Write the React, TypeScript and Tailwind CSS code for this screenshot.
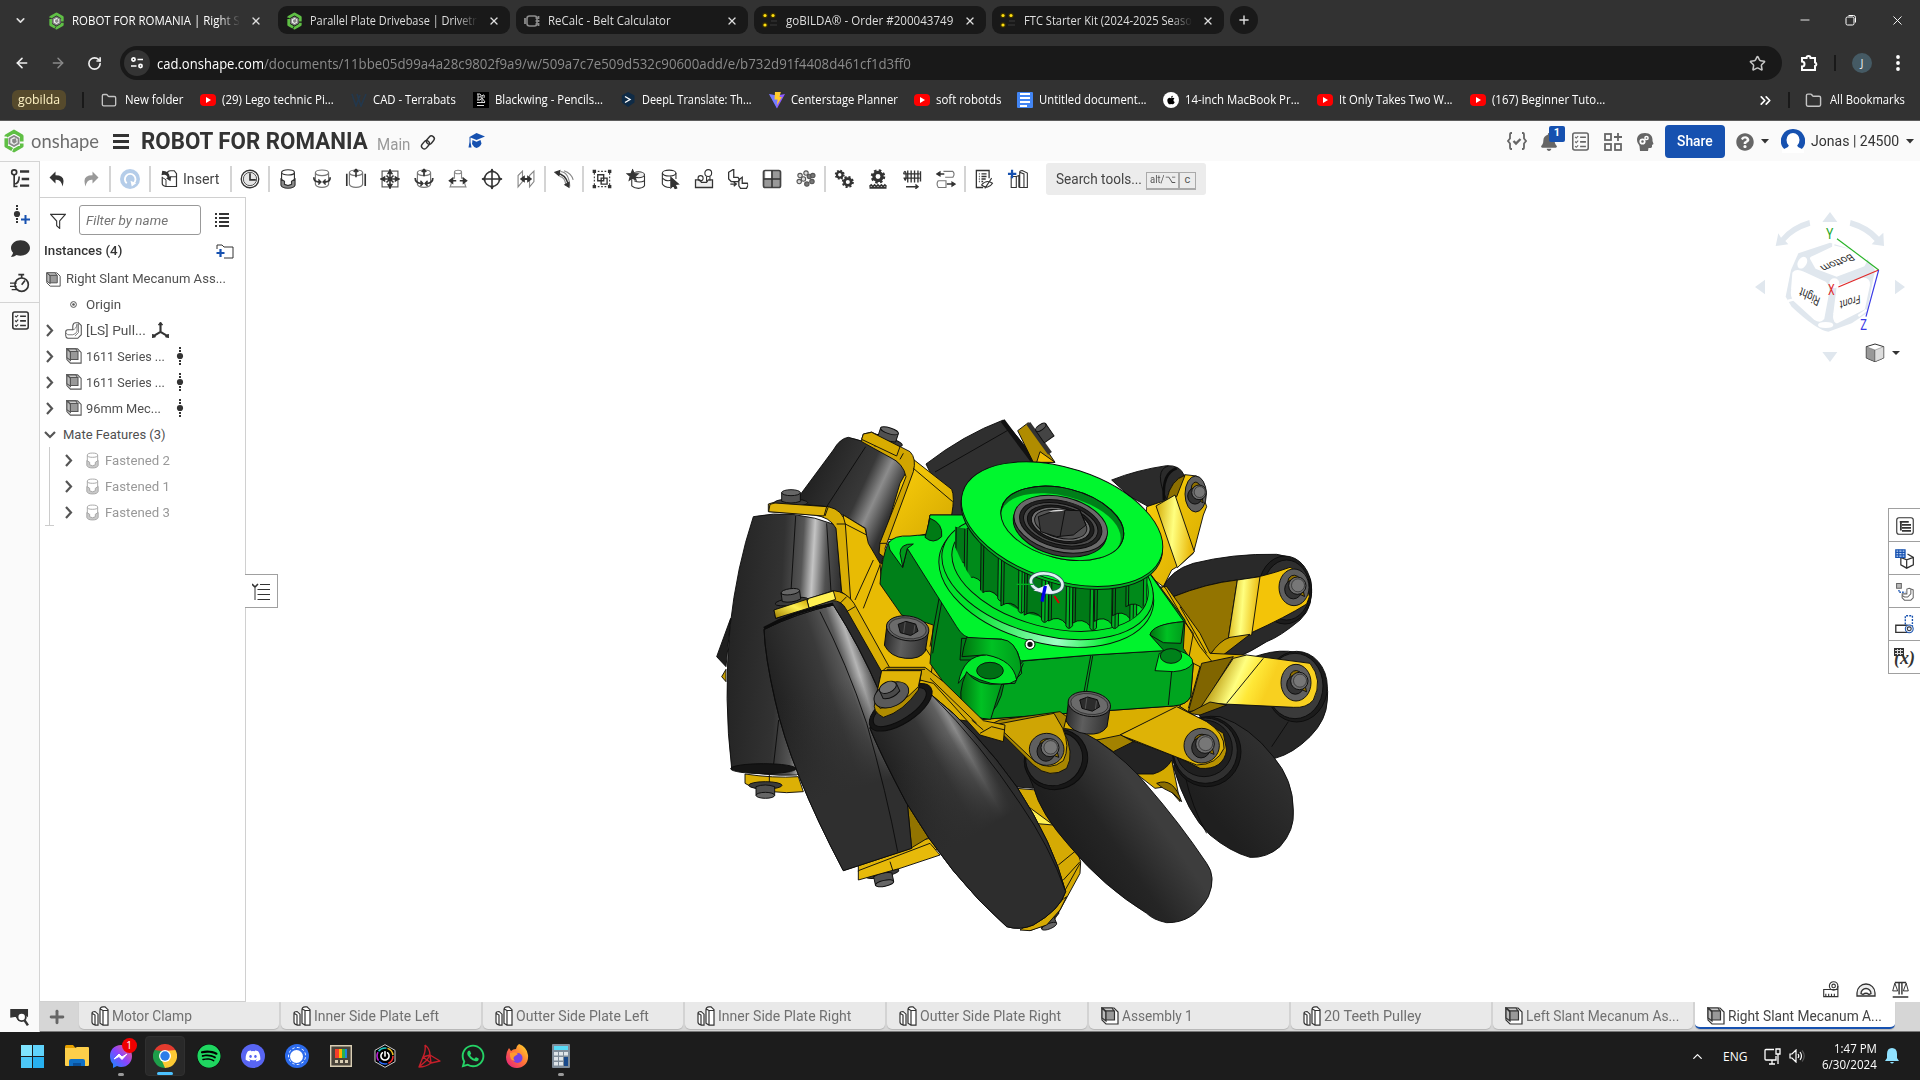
import React, { useLayoutEffect, useRef, useState } from "react";
import {
  ArrowLeft, ArrowRight, RotateCw, Star, X, Plus, Minus, ChevronDown, ChevronUp, ChevronsRight, Folder,
} from "lucide-react";
import {
  FaSpotify, FaDiscord, FaWhatsapp, FaApple, FaBell, FaComment, FaQuestionCircle, FaPowerOff,
} from "react-icons/fa";

/* Text drawn at an exact width, condensed or widened horizontally */
function Fit({ w, children, className = "" }: { w: number; children: React.ReactNode; className?: string }) {
  const ref = useRef<HTMLSpanElement>(null);
  const [s, setS] = useState(1);
  useLayoutEffect(() => {
    if (ref.current) setS(w / ref.current.offsetWidth);
  }, [w]);
  return (
    <span className={"inline-flex shrink-0 whitespace-nowrap " + className} style={{ width: w }}>
      <span ref={ref} className="inline-block origin-left whitespace-pre" style={{ transform: `scaleX(${s})` }}>
        {children}
      </span>
    </span>
  );
}

function Svg({ children, s = 24, className = "" }: { children: React.ReactNode; s?: number; className?: string }) {
  return (
    <svg viewBox="0 0 24 24" width={s} height={s} className={"shrink-0 " + className} fill="none" stroke="#333" strokeWidth="1.3">
      {children}
    </svg>
  );
}

function HexLogo({ s = 18 }: { s?: number }) {
  return (
    <svg viewBox="1 0 22 26" width={s} height={s * 1.2} className="shrink-0" fill="none">
      <path d="M12 2.500 20.500 7.500V18.500L12 23.500 3.500 18.500V7.500Z" stroke="#5fbf45" strokeWidth="4" strokeDasharray="16 2 14 1" strokeLinejoin="round" />
      <path d="M12 7.500 17 10.3V15.8L12 18.500 7 15.8V10.3Z" stroke="#888" strokeWidth="2" fill="#eee" />
      <path d="M10 11l4-1 1 4-3 2-2-2z" fill="#888" />
    </svg>
  );
}

function GoBilda() {
  return (
    <svg viewBox="0 0 16 20" width="16" height="20" className="shrink-0">
      <path d="M9 10h6M8 14h7" stroke="#3a3a3a" />
      {[[3, 4.500], [11, 4.500], [3, 14]].map(([x, y], i) => (
        <g key={i}>
          <circle cx={x} cy={y} r="2.800" fill="#3a3000" />
          <circle cx={x} cy={y} r="1.600" fill="#ffdf10" />
        </g>
      ))}
    </svg>
  );
}

function Belt() {
  return (
    <svg viewBox="0 0 16 12" width="16" height="12" fill="none" stroke="#8b8b8b">
      <rect x="3" y="1" width="10" height="10" rx="2.500" strokeWidth="1.600" />
      <path d="M1 3v6M12.500 2v2M14.500 1v3M12.500 5v2M14.500 5v2M12.500 8v2M14.500 8v3" strokeWidth="1.800" />
    </svg>
  );
}

const tabs = [
  { t: "ROBOT FOR ROMANIA | Right S", w: 168, icon: <HexLogo s={15} />, on: true },
  { t: "Parallel Plate Drivebase | Drivetr", w: 167, icon: <HexLogo s={15} /> },
  { t: "ReCalc - Belt Calculator", w: 123, icon: <Belt /> },
  { t: "goBILDA® - Order #200043749", w: 167, icon: <GoBilda /> },
  { t: "FTC Starter Kit (2024-2025 Seaso", w: 168, icon: <GoBilda /> },
];

function TabStrip() {
  return (
    <div className="flex h-[40px] items-center text-[#dedede]">
      <div className="flex w-[40px] justify-center">
        <ChevronDown size={13} strokeWidth={3} />
      </div>
      {tabs.map((t, i) => (
        <div key={i} className={"mr-[6px] flex h-[28px] w-[232px] items-center rounded-[9px] pt-px pl-2 " + (t.on ? "" : "bg-[#191919]")}>
          <div className="flex w-[16px] justify-center">{t.icon}</div>
          <div className={"ml-2 flex w-[170px] overflow-hidden " + (t.w > 167 || i === 1 ? "[mask-image:linear-gradient(to_right,black_86%,transparent_99%)]" : "")}>
            <Fit w={t.w} className={t.on ? "text-white" : ""}>{t.t}</Fit>
          </div>
          <X size={12} strokeWidth={2.600} className="ml-2" />
        </div>
      ))}
      <div className="flex size-[28px] items-center justify-center rounded-full bg-[#191919]">
        <Plus size={14} strokeWidth={2.400} />
      </div>
      <div className="ml-auto flex items-center text-white">
        <Minus size={14} strokeWidth={1.500} />
        <svg width="12" height="12" viewBox="0 0 12 12" className="ml-[33px]" fill="none" stroke="white">
          <rect x="1" y="3" width="8" height="8" rx="1.500" />
          <path d="M3.500 1.500h5a2 2 0 0 1 2 2v5" />
        </svg>
        <X size={15} strokeWidth={1.500} className="mr-[15px] ml-[33px]" />
      </div>
    </div>
  );
}

function AddressBar() {
  return (
    <div className="flex h-[46px] items-center pl-[14px] text-[#f0f0f0]">
      <ArrowLeft size={16} strokeWidth={2.400} />
      <ArrowRight size={16} strokeWidth={2.200} className="ml-[20px] text-[#8a8a8a]" />
      <RotateCw size={15} strokeWidth={2.600} className="ml-[21px]" />
      <div className="ml-[18px] flex h-[34px] w-[1662px] items-center rounded-full bg-[#191919] pl-[4px] text-[14px]">
        <div className="flex size-[26px] items-center justify-center rounded-full bg-[#343434]">
          <svg width="14" height="14" viewBox="0 0 14 14" fill="none" stroke="white" strokeWidth="1.700">
            <circle cx="3.500" cy="3.500" r="1.600" /><path d="M7.500 3.500H13M1 10h5.500" /><circle cx="10.500" cy="10" r="1.600" />
          </svg>
        </div>
        <Fit w={107} className="ml-[7px] text-white">cad.onshape.com</Fit>
        <Fit w={647} className="text-[#8b8b8b]">/documents/11bbe05d99a4a28c9802f9a9/w/509a7c7e509d532c90600add/e/b732d91f4408d461cf1d3ff0</Fit>
        <Star size={17} strokeWidth={2.200} className="mr-[16px] ml-auto text-[#c6c6c6]" />
      </div>
      <svg viewBox="0 0 18 18" width="18" height="18" className="ml-[18px]" fill="none" stroke="white" strokeWidth="2">
        <path d="M2 4h4.500a2 2 0 0 1 4 0H15v4.500a1.800 1.800 0 0 1 0 3.500V16H2v-3.500a2.500 2.500 0 0 0 0-5z" />
      </svg>
      <div className="ml-[16px] h-4 w-[2px] bg-[#191919]" />
      <div className="ml-[16px] flex size-[20px] items-center justify-center rounded-full bg-[#455a64] text-[11px]">J</div>
      <svg width="6" height="16" viewBox="0 0 6 16" className="ml-[23px]" fill="white">
        <circle cx="3" cy="2" r="1.900" /><circle cx="3" cy="8" r="1.900" /><circle cx="3" cy="14" r="1.900" />
      </svg>
    </div>
  );
}

const Yt = () => (
  <div className="flex h-[12px] w-4 items-center justify-center rounded-[4px] bg-[#f00]">
    <svg width="6" height="6" viewBox="0 0 6 6"><path d="M1 0 6 3 1 6Z" fill="white" /></svg>
  </div>
);

const marks: { i: React.ReactNode; t: string; w: number; ml: number; g?: number }[] = [
  { i: <Folder size={17} color="#c4c4c4" strokeWidth={2} />, t: "New folder", w: 58, ml: 17, g: 8 },
  { i: <Yt />, t: "(29) Lego technic Pi...", w: 112, ml: 17 },
  { i: <svg width="16" height="14" viewBox="0 0 16 14" fill="none" stroke="#23384d" strokeWidth="1.600"><path d="M1 1l4 12 4-11M6 1l4 12 5-12" /></svg>, t: "CAD - Terrabats", w: 83, ml: 17 },
  { i: <div className="flex h-4 w-4 flex-col items-center justify-center bg-black text-white"><svg width="10" height="14" viewBox="0 0 10 14" fill="none" stroke="#ddd"><path d="M1 1h3q2 1 0 3H2M1 7h3q2-1 1-3M2 1v6M6 3q3-3 2 2M6 5l3 4M6 2v7M1 9.500h8M1 12.500h7" /></svg></div>, t: "Blackwing - Pencils...", w: 108, ml: 17 },
  { i: <svg width="15" height="16" viewBox="0 0 15 16"><path d="M7 0l6.500 3.600v7L7 15 .8 10.600v-7z" fill="#0f2b46" /><path d="M4 4.500l5 3-5 3" fill="none" stroke="#fff" strokeWidth="1.400" /></svg>, t: "DeepL Translate: Th...", w: 110, ml: 17, g: 6 },
  { i: <svg width="16" height="17" viewBox="0 0 16 17"><path d="M0 2 8 16.500 16 2 8 3.500Z" fill="#8d5cff" /><path d="M0 2l8 14.500V4z" fill="#5a9cff" opacity=".5" /><path d="M6 0l6-.5-1.500 5.500h2.500L8 13l.5-5.500H5.500z" fill="#ffcb2b" /></svg>, t: "Centerstage Planner", w: 107, ml: 17 },
  { i: <Yt />, t: "soft robotds", w: 65, ml: 16 },
  { i: <div className="flex h-4 w-4 flex-col justify-center gap-[2px] rounded-[1px] bg-[#4285f4] px-[3px]"><i className="h-[1.500px] bg-white" /><i className="h-[2px] bg-white" /><i className="h-[2px] bg-white" /><i className="mr-[3px] h-[2px] bg-white" /></div>, t: "Untitled document...", w: 108, ml: 16 },
  { i: <div className="flex size-4 items-center justify-center rounded-full bg-white"><FaApple size={10} color="#000" /></div>, t: "14-inch MacBook Pr...", w: 115, ml: 16 },
  { i: <Yt />, t: "It Only Takes Two W...", w: 114, ml: 17 },
  { i: <Yt />, t: "(167) Beginner Tuto...", w: 113, ml: 17 },
];

function Bookmarks() {
  return (
    <div className="flex h-[34px] items-center pb-[6px] pl-[12px] text-white">
      <div className="flex h-[20px] w-[54px] items-center justify-center rounded-[6px] bg-[#564a2c] text-[#fff3c4]">
        <Fit w={42}>gobilda</Fit>
      </div>
      <div className="ml-[16px] h-4 w-[2px] bg-[#191919]" />
      {marks.map((m, k) => (
        <div key={k} className="flex items-center" style={{ marginLeft: m.ml }}>
          <div className="flex w-4 justify-center">{m.i}</div>
          <span style={{ width: m.g ?? 6 }} />
          <Fit w={m.w}>{m.t}</Fit>
        </div>
      ))}
      <ChevronsRight size={17} strokeWidth={2.400} className="ml-auto" />
      <div className="ml-[14px] h-4 w-[2px] bg-[#191919]" />
      <Folder size={17} color="#c4c4c4" className="mr-[8px] ml-[15px]" />
      <Fit w={75} className="mr-[15px]">All Bookmarks</Fit>
    </div>
  );
}

const Check = ({ c = "#333" }: { c?: string }) => (
  <svg viewBox="1 0 22 24" width="17" height="19" fill="none" className="shrink-0">
    <rect x="2" y="1" width="20" height="22" rx="2.500" stroke={c} strokeWidth="2" />
    <path d="M5 6l1.500 1.500L9 5M5 12l1.500 1.500L9 11M5 18l1.500 1.500L9 17" stroke={c} strokeWidth="1.400" />
    <path d="M11.500 6.500H19M11.500 12.500H19M11.500 18.500H19" stroke={c} strokeWidth="2.200" />
  </svg>
);

const Caret = ({ className = "" }: { className?: string }) => (
  <svg width="8" height="5" viewBox="0 0 8 5" className={className}><path d="M0 0h8L4 4.600z" fill="#333" /></svg>
);

function DocHeader() {
  return (
    <div className="flex h-[40px] shrink-0 items-center bg-[#fafafa] pl-[4px] font-['Roboto',sans-serif]">
      <HexLogo s={20} />
      <Fit w={68} className="ml-[7px] pb-[3px] font-['Lato',sans-serif] text-[20px] text-[#6d6d6d]">onshape</Fit>
      <div className="ml-[14px] flex w-4 flex-col gap-[3px]">
        <i className="h-[3px] bg-[#333]" /><i className="h-[3px] bg-[#333]" /><i className="h-[3px] bg-[#333]" />
      </div>
      <Fit w={227} className="ml-[12px] pt-[3px] text-[23px] font-bold text-[#333]">ROBOT FOR ROMANIA</Fit>
      <Fit w={33} className="ml-[9px] pt-[7px] text-[16px] text-[#999]">Main</Fit>
      <Svg s={18} className="mt-[2px] ml-[9px]">
        <g transform="rotate(-50 12 12)" stroke="#333" strokeWidth="1.900">
          <rect x="1" y="8" width="12" height="7.500" rx="3.700" /><rect x="10" y="9" width="12" height="7.500" rx="3.700" />
        </g>
      </Svg>
      <svg width="17" height="16" viewBox="0 0 17 16" className="ml-[31px]" fill="#1651b0">
        <path d="M8.500 0 17 3.500 8.500 7 2.500 4.600V9l1 5.500H.5L1.500 9V4z" /><path d="M4.500 7l4 1.700 4-1.700 1 3.500q-1 3-5 4.500-3-1-4.500-4z" />
      </svg>
      <div className="ml-auto flex items-center">
        <svg width="20" height="18" viewBox="0 0 20 18" fill="none" stroke="#666" strokeWidth="1.800">
          <path d="M5 1H4Q3 1 3 3v3.500L1 9l2 2.500V15q0 2 1 2h1M15 1h1q1 0 1 2v3.500L19 9l-2 2.500V15q0 2-1 2h-1" /><path d="M6.500 9l2.500 2.500L13.500 7" strokeWidth="2.400" />
        </svg>
        <div className="relative ml-[13px] pt-px">
          <FaBell size={18} color="#666" />
          <span className="absolute -top-[6px] left-[9px] flex size-[16px] items-center justify-center rounded-[2px] bg-[#1651b0] text-[11px] font-bold text-white">1</span>
        </div>
        <div className="ml-[14px] pt-px"><Check c="#666" /></div>
        <svg width="18" height="18" viewBox="0 0 18 18" className="mt-px ml-[15px]" fill="none" stroke="#666" strokeWidth="1.800">
          <rect x="1" y="1" width="6" height="6" /><rect x="1" y="11" width="6" height="6" /><rect x="11" y="11" width="6" height="6" /><path d="M14 0v8M10 4h8" />
        </svg>
        <svg width="18" height="18" viewBox="0 0 18 18" className="mt-px ml-[14px]">
          <path d="M9 0C3 0 1 3.500 1 7c0 3 2 4 2.500 6l.5 5h8l.5-3h2.500q1.500-.5 1-3l1.500-1-1-3C17 3 14 0 9 0Z" fill="#666" />
          <circle cx="6.500" cy="8.500" r="2.200" fill="none" stroke="white" strokeWidth="1.800" /><circle cx="10.500" cy="5" r="1.600" fill="none" stroke="white" strokeWidth="1.500" />
        </svg>
        <div className="ml-[11px] flex h-[33px] w-[60px] items-center justify-center rounded-[4px] bg-[#1651b0] text-[15px] font-medium text-white">
          <Fit w={36}>Share</Fit>
        </div>
        <FaQuestionCircle size={18} color="#666" className="mt-px ml-[11px]" />
        <Caret className="ml-[7px]" />
        <svg width="24" height="24" viewBox="0 0 24 24" className="ml-[12px]">
          <path d="M12 0a12 12 0 0 1 10.500 18l-3 3.500H4.500L1.500 18A12 12 0 0 1 12 0" fill="#1651b0" />
          <ellipse cx="12" cy="11" rx="6.500" ry="7" fill="white" /><path d="M8 16h8l1 2 6 3v3H1v-3l6-3z" fill="white" />
        </svg>
        <Fit w={88} className="ml-[6px] text-[15px] text-[#333]">Jonas | 24500</Fit>
        <Caret className="mr-[6px] ml-[7px]" />
      </div>
    </div>
  );
}

const Cyl = () => <><ellipse cx="12" cy="5" rx="7.500" ry="3.200" /><path d="M4.500 5v13q1 3.500 7.500 3.500t7.500-3.500V5" /></>;
const B = "#333";

const PartIcon = () => (
  <svg width="18" height="20" viewBox="0 0 18 22" preserveAspectRatio="none" fill="white" stroke="#333" strokeWidth="1.200" className="shrink-0">
    <path d="M1 8q0-2 3-2l3 3v12H4q-3-1-3-3zM1 8l3 2v11" />
    <path d="M9 4q0-3 3-3h2l3 3v17h-5l-3-2zM9 3l3 2v16M12 5h5" />
  </svg>
);
const AsmIcon = ({ s = 18, c = "#333" }: { s?: number; c?: string }) => (
  <svg width={s} height={s} viewBox="0 0 18 18" className="shrink-0" stroke={c} strokeWidth="1.200">
    <path d="M1 1h12l4 4v12H5l-4-4z" fill="white" /><path d="M1 1l4 4v9L1 11z" fill="#bbb" /><path d="M1 1h10l2 3H5z" fill="#ccc" /><path d="M5 4h8.500v9H5z" fill="#999" />
  </svg>
);
const Mate = ({ s = 24, o = 1 }: { s?: number; o?: number }) => (
  <Svg s={s}>
    <g opacity={o}>
      <ellipse cx="12" cy="4.500" rx="7.300" ry="3" /><path d="M4.700 5v8M19.300 5v8" />
      <path d="M4 12v7q1 3.500 8 3.500t8-3.500v-7l-4 2.500v3.500l-4 1.500-4-1.500v-3.500z" fill="#8a8a8a" />
    </g>
  </Svg>
);

const groupA: React.ReactNode[] = [
  <Mate key="m" />,
  <Svg key="1"><g stroke="#777"><Cyl /></g><path d="M3 10q-1.500 5 6 5.500M21 10q1.500 5-6 5.500" stroke={B} strokeWidth="2" /><path d="M8 12.500l3 3-3 3M16 12.500l-3 3 3 3" fill={B} /></Svg>,
  <Svg key="2"><g stroke="#777"><Cyl /></g><path d="M1.500 6v14M22.500 6v14M12 10V1M9.500 4 12 1l2.500 3" stroke={B} strokeWidth="1.900" /></Svg>,
  <Svg key="3"><rect x="3" y="3" width="18" height="18" stroke="#555" /><path d="M12 1v22M1 12h22M8 8l8 8M16 8l-8 8" stroke={B} strokeWidth="1.800" /><path d="M12 2l2.500 4h-5zM12 22l2.500-4h-5zM2 12l4-2.500v5zM22 12l-4-2.500v5z" fill={B} /></Svg>,
  <Svg key="4"><g stroke="#777"><Cyl /></g><path d="M12 9V1M9.500 4 12 1l2.500 3M2 11q0 6 7 6M22 11q0 6-7 6" stroke={B} strokeWidth="2" /><path d="M8 14l3 3-3 3M16 14l-3 3 3 3" fill={B} /></Svg>,
  <Svg key="5"><path d="M8 4v7H6q-2 8-3 10h18q-1-2-3-10h-2V4" stroke="#888" /><ellipse cx="12" cy="4" rx="4" ry="2" stroke="#888" /><path d="M3 14h7M21 14h-7" stroke={B} strokeWidth="1.700" /><path d="M2 14l4-3v6zM22 14l-4-3v6z" fill={B} /></Svg>,
  <Svg key="6"><circle cx="12" cy="12" r="8.500" strokeWidth="1.800" /><path d="M12 1v22M1 12h22" strokeWidth="1.800" /><path d="M12 1l1.500 2.500h-3zM12 23l1.500-2.500h-3zM1 12l2.500-1.500v3zM23 12l-2.500-1.500v3z" fill={B} /></Svg>,
  <Svg key="7"><path d="M3 21V8l5-5v12zM16 21V8l5-5v12z" stroke="#888" /><path d="M7 12h10" stroke={B} strokeWidth="2" /><path d="M6 12l4-3v6zM18 12l-4-3v6z" fill={B} /></Svg>,
];
const groupB: React.ReactNode[] = [
  <Svg key="1"><rect x="3" y="3" width="18" height="18" strokeDasharray="2 2" /><path d="M1 1h4v4H1zM19 1h4v4h-4zM1 19h4v4H1zM19 19h4v4h-4z" fill={B} stroke="none" /><path d="M7 7h7v7H7zM11 11h7v7h-7z" fill="white" strokeWidth="1.600" /></Svg>,
  <Svg key="2"><path d="M7 8v12q3 3 8 3t7-3V8M10 14q6 3 12 0" /><ellipse cx="15" cy="7" rx="7" ry="3.500" fill="#eee" /><path d="M8 1l1.800 4.500 4.800.3-3.700 3 1.200 4.600L8 11l-4 2.500 1.200-4.700L1.500 5.800l4.700-.3z" fill={B} /></Svg>,
  <Svg key="3"><ellipse cx="11" cy="5" rx="8" ry="3.500" /><path d="M3 5v13q2 4 9 4M19 5v7M3 11q5 5 11 2" /><path d="M13 10l9 8-4 .5 2 4-2 1-2-4-3 3z" fill={B} /></Svg>,
  <Svg key="4"><path d="M2 13h5l2 3h6l2-3h5v9H2z" fill="#eee" strokeWidth="1.500" /><circle cx="8" cy="11" r="3" /><circle cx="17" cy="5" r="4" /><path d="M15 9v6M19 9v5" /></Svg>,
  <Svg key="5"><path d="M1 4l5-3h1v9h5l2 3-2 2H4l-3-3zM13 13l4-3v7h6l1 2-2 4h-7l-2-3z" strokeWidth="1.500" /><path d="M3 18h7M7 15.500 10 18l-3 2.500" stroke={B} strokeWidth="1.600" /></Svg>,
  <Svg key="6"><rect x="2" y="2" width="20" height="20" rx="2" fill="#999" stroke="#444" strokeWidth="2" /><rect x="4" y="3" width="7" height="8" fill="white" stroke="none" /><path d="M12 2v20M2 12h20" strokeWidth="1.800" /></Svg>,
  <Svg key="7">{[[5, 8], [12, 5], [9, 12], [16, 9], [19, 15], [4, 15], [13, 18], [20, 8]].map(([x, y]) => <circle key={x + "-" + y} cx={x} cy={y} r="2.600" fill={x > 12 ? "#777" : "#ddd"} stroke="#555" />)}</Svg>,
];
const Gear = ({ x, y, r }: { x: number; y: number; r: number }) => (
  <g><circle cx={x} cy={y} r={r} strokeWidth={r * 0.8} /><circle cx={x} cy={y} r={r * 1.500} strokeWidth={r * 0.550} strokeDasharray={`${r * 0.620} ${r * 0.560}`} /></g>
);
const groupC: React.ReactNode[] = [
  <Svg key="1"><Gear x={7} y={7} r={3.300} /><Gear x={16.500} y={15.500} r={4} /></Svg>,
  <Svg key="2"><Gear x={12} y={9} r={4.800} /><path d="M2 21l2-2 2 2 2-2 2 2 2-2 2 2 2-2 2 2 2-2 2 2M2 22.500h20" strokeWidth="2" /></Svg>,
  <Svg key="3"><path d="M2 6q2-6 3 0v5q-1 5-2 0M7 2v14M11 2v14M15 2v14M19 2v14M22 3v12M2 6h19M2 11h19" strokeWidth="1.600" /><path d="M5 21h14M16 18.500l3 2.500-3 2.500" strokeWidth="1.800" /></Svg>,
  <Svg key="4"><path d="M9 3h11q3 3 0 7H11M3 14h9v8H3q-3-4 0-8" stroke="#777" /><path d="M2 6h8M22 18h-9" strokeWidth="1.800" /><path d="M1 6l4-2.500v5zM23 18l-4-2.500v5z" fill={B} /></Svg>,
];
const groupD: React.ReactNode[] = [
  <Svg key="1"><path d="M11 22H3V2h15v9" strokeWidth="1.500" /><path d="M6 6h1M9 6h6M6 9h1M9 9h6M6 12h1M9 12h5M6 15h1M9 15h2" strokeWidth="1.700" /><path d="M9 19q6-7 13-2-5 8-13 2M21 11l-8 12" /></Svg>,
  <Svg key="2" ><path d="M4 9v13h6V9zM14 4q0-2 3-2l6 3v17h-9zM10 9l3-1v14M14 4l5 2v16" /><path d="M5 1v10M0 6h10" stroke="#1651b0" strokeWidth="2.600" /></Svg>,
];

const Cell = ({ children }: { children: React.ReactNode }) => <div className="flex w-[34px] justify-center">{children}</div>;
const Div = () => <div className="mx-px h-[26px] w-[2px] bg-[#d4d4d4]" />;

function Toolbar() {
  return (
    <div className="flex h-[36px] shrink-0 items-center font-['Roboto',sans-serif]">
      <Cell><Svg s={18}><path d="M10 2 2 10l8 8v-5q8-1 9 9 6-15-9-15z" fill={B} stroke="none" /></Svg></Cell>
      <Cell><Svg s={18}><path d="M14 2l8 8-8 8v-5q-8-1-9 9-6-15 9-15z" fill="#999" stroke="none" /></Svg></Cell>
      <Div />
      <div className="flex w-[36px] justify-center">
        <div className="flex size-[20px] items-center justify-center rounded-full bg-[#b5cde9]">
          <Svg s={15}><path d="M6 18A8.500 8.500 0 1 1 17 18" stroke="white" strokeWidth="3" /><path d="M12 14l2 9 7-5z" fill="white" stroke="none" /></Svg>
        </div>
      </div>
      <Div />
      <div className="flex w-[77px] items-center pl-[8px] text-[15px] text-[#444]">
        <Svg s={18}><path d="M10 4q0-3 4-3h5l3 4v17H8q-5-1-5-4V9" strokeWidth="1.600" /><path d="M3 10l5 3v9M14 9h8" /><path d="M3 1q9 0 10 8l2-1-1 7-6-4 2-1Q9 5 2 7z" fill={B} stroke="none" /></Svg>
        <Fit w={36} className="ml-[5px]">Insert</Fit>
      </div>
      <Div />
      <Cell><Svg s={20}><circle cx="12" cy="12" r="10.500" strokeWidth="1.600" /><circle cx="12" cy="12" r="8" fill="#e6e6e6" strokeWidth="1" /><path d="M12 5v8h7" strokeWidth="2" /></Svg></Cell>
      <Div />
      {groupA.map((n, i) => <Cell key={i}><span className="scale-[.88]">{n}</span></Cell>)}
      <Div />
      <Cell><Svg s={20}><path d="M8 3q10 1 11 18M7 9q6 1 7 9M12 2q9 3 11 11" stroke="#888" /><path d="M3 5q11 1 14 13" stroke={B} strokeWidth="1.800" /><path d="M1 4l6-2-1 6zM18 22l-5-3 5-3z" fill={B} /></Svg></Cell>
      <Div />
      {groupB.map((n, i) => <Cell key={i}><span className="scale-[.85]">{n}</span></Cell>)}
      <Div />
      {groupC.map((n, i) => <Cell key={i}><span className="scale-[.85]">{n}</span></Cell>)}
      <Div />
      {groupD.map((n, i) => <Cell key={i}><span className="scale-[.85]">{n}</span></Cell>)}
      <div className="ml-[11px] flex h-[32px] w-[160px] items-center rounded-[3px] bg-[#ececec] pl-[10px] text-[15px] text-[#444]">
        <Fit w={86}>Search tools...</Fit>
        <span className="mt-[4px] ml-[4px] flex h-[18px] w-[33px] items-center justify-center border border-b-2 border-[#aaa] text-[11px] text-[#555]"><Fit w={26}>alt/⌥</Fit></span>
        <span className="mt-[4px] flex h-[18px] w-[17px] items-center justify-center border border-b-2 border-[#aaa] text-[11px] text-[#555]">c</span>
      </div>
    </div>
  );
}

const Dof = ({ s = 18 }: { s?: number }) => (
  <svg width="8" height={s} viewBox="0 0 8 18" fill="#333" className="shrink-0"><path d="M3 0h2v2H3zM3 3h2v2H3zM3 13h2v2H3zM3 16h2v2H3z" /><circle cx="4" cy="9" r="3.100" /></svg>
);

function Rail() {
  return (
    <div className="flex w-[40px] shrink-0 flex-col items-center border-t border-r border-[#d4d4d4] bg-[#fafafa] pl-px">
      <div className="flex h-[34px] items-center">
        <Svg s={20}><circle cx="5" cy="4" r="3" strokeWidth="2" /><path d="M5 7v14h4M5 18q6 0 6-9" strokeWidth="2" /><path d="M12 3h11M14 12h9M12 20h11" strokeWidth="2.800" /></Svg>
      </div>
      <div className="flex h-[36px] items-center pl-[3px]">
        <Dof />
        <svg width="9" height="9" viewBox="0 0 9 9" className="mt-[10px]"><path d="M4.500 0v9M0 4.500h9" stroke="#1651b0" strokeWidth="2" /></svg>
      </div>
      <div className="flex h-[32px] items-center"><FaComment size={19} color="#333" /></div>
      <div className="flex h-[38px] items-center">
        <Svg s={20}><circle cx="14" cy="14" r="8" strokeWidth="2" /><path d="M10 2h7M14 2v4M14 14l4-5" strokeWidth="2" /><path d="M0 12h8M0 16h8M2 20h7" strokeWidth="1.500" /></Svg>
      </div>
      <div className="-ml-px h-px w-[40px] bg-[#d4d4d4]" />
      <div className="flex h-[35px] items-center"><Check /></div>
      <div className="mt-auto flex h-[25px] items-start">
        <Svg s={20}><path d="M1 3h20v8l-5-4-6 3v5l-3-4-6 1z" fill={B} /><circle cx="14" cy="12" r="5" fill="white" strokeWidth="2.200" /><path d="M17.500 16l4 6" strokeWidth="3" /></Svg>
      </div>
    </div>
  );
}

const Chev = () => (
  <svg width="8" height="13" viewBox="0 0 8 13" fill="none" stroke="#555" strokeWidth="2.200" className="shrink-0"><path d="M1 1l5 5.500-5 5.500" /></svg>
);
const Ell = () => (
  <Svg s={17}><path d="M1 14q0-3 3-3h7V5q1-4 4-4h4l4 4v13l-5 5H4q-3-1-3-4z" fill="#fff" strokeWidth="1.500" stroke="#555" /><path d="M11 11q5-1 6-8v10q-1 4-6 5H4l-3-3M19 1v14l-5 5" stroke="#777" /></Svg>
);
const Fixed = () => (
  <Svg s={17}><path d="M12 14V2M12 14 2 20M12 14l10 6" strokeWidth="3" /><path d="M12 0l3 4H9zM0 22l1-5 4 4zM24 22l-5-1 4-4z" fill={B} /></Svg>
);

function Panel() {
  const rows = [
    { i: <Ell />, t: "[LS] Pull...", w: 60, e: <Fixed />, g: 6 },
    { i: <AsmIcon s={16} c="#555" />, t: "1611 Series ...", w: 79, e: <Dof />, g: 11 },
    { i: <AsmIcon s={16} c="#555" />, t: "1611 Series ...", w: 79, e: <Dof />, g: 11 },
    { i: <AsmIcon s={16} c="#555" />, t: "96mm Mec...", w: 75, e: <Dof />, g: 15 },
  ];
  return (
    <div className="flex w-[206px] shrink-0 flex-col border-t border-r border-b border-[#d0d0d0] font-['Roboto',sans-serif] text-[13px] text-[#505050]">
      <div className="mt-[7px] flex h-[30px] items-center pl-[10px]">
        <Svg s={16} className="mt-px"><path d="M1 2h22l-8.500 10v11L10 19v-7z" strokeWidth="1.700" /></Svg>
        <div className="ml-[13px] flex h-[30px] w-[122px] items-center rounded-[3px] border border-[#999] pt-px pl-[6px] text-[#757575] italic">
          <Fit w={82}>Filter by name</Fit>
        </div>
        <svg width="14" height="14" viewBox="0 0 14 14" className="ml-[14px]" stroke="#333" strokeWidth="2"><path d="M0 1h2M4 1h10M0 5h2M4 5h10M0 9h2M4 9h10M0 13h2M4 13h10" /></svg>
      </div>
      <div className="flex h-[32px] items-center pl-[4px] font-medium text-[#333]">
        <Fit w={78}>Instances (4)</Fit>
        <svg width="18" height="15" viewBox="0 0 18 15" className="ml-[94px]" fill="none"><path d="M1 5V1h5l2 2h9v11H8" stroke="#333" /><path d="M4.500 5v8M.5 9h8" stroke="#1651b0" strokeWidth="2.200" /></svg>
      </div>
      <div className="flex h-[24px] items-center pl-[6px]">
        <AsmIcon s={15} c="#555" /><Fit w={160} className="ml-[5px]">Right Slant Mecanum Ass...</Fit>
      </div>
      <div className="flex h-[26px] items-center pt-px pl-[30px]">
        <svg width="7" height="7" viewBox="0 0 7 7"><circle cx="3.500" cy="3.500" r="2.900" fill="none" stroke="#555" /><circle cx="3.500" cy="3.500" r="1.300" fill="#555" /></svg>
        <Fit w={35} className="ml-[9px]">Origin</Fit>
      </div>
      {rows.map((r, i) => (
        <div key={i} className="flex h-[26px] items-center pl-[6px]">
          <Chev />
          <div className="ml-[11px] flex w-[17px] justify-center">{r.i}</div>
          <Fit w={r.w} className="ml-[4px] pt-px">{r.t}</Fit>
          <span style={{ width: r.g }} />
          {r.e}
        </div>
      ))}
      <div className="flex h-[26px] items-center pt-px pl-[4px]">
        <svg width="12" height="8" viewBox="0 0 12 8" fill="none" stroke="#555" strokeWidth="2.200"><path d="M1 1l5 5 5-5" /></svg>
        <Fit w={103} className="ml-[7px]">Mate Features (3)</Fit>
      </div>
      <div className="flex">
        <div className="ml-[5px] flex h-[79px] w-[9px] justify-center border-b border-[#ccc]"><div className="w-px bg-[#ccc]" /></div>
        <div>
          {["Fastened 2", "Fastened 1", "Fastened 3"].map((t) => (
            <div key={t} className="flex h-[26px] items-center pt-px pl-[11px] text-[#999]">
              <Chev />
              <div className="ml-[11px] flex w-[17px] justify-center"><Mate s={17} o={0.450} /></div>
              <Fit w={65} className="ml-[4px]">{t}</Fit>
            </div>
          ))}
        </div>
      </div>
    </div>
  );
}

/* E-clip with pin head on an axle end */
const Clip = ({ x, y, rx = 45, ry = 55, r = 26 }: { x: number; y: number; rx?: number; ry?: number; r?: number }) => (
  <g>
    <ellipse cx={x} cy={y} rx={rx} ry={ry} fill="#5f5f5f" />
    <path d={`M${x + rx * 0.700} ${y + ry * 0.500}L${x + rx * 0.200} ${y + ry * 0.300}Q${x - rx * 0.700} ${y + ry * 0.200} ${x - rx * 0.350} ${y - ry * 0.500}Q${x} ${y - ry * 0.850} ${x + rx * 0.450} ${y - ry * 0.450}Z`} fill="#8f6f00" />
    <ellipse cx={x - 2} cy={y + 6} rx={r} ry={r * 1.100} fill="#333" />
    <circle cx={x + 10} cy={y - 5} r={r} fill="#6e6e6e" />
    <circle cx={x + 12} cy={y - 6} r={r * 0.750} fill="#777" strokeWidth="1.500" />
  </g>
);
const Pin = ({ x, y, a = 0 }: { x: number; y: number; a?: number }) => (
  <g transform={`translate(${x} ${y}) rotate(${a})`}>
    <ellipse cx="0" cy="22" rx="50" ry="11" fill="#3b3b3b" />
    <path d="M-28 -8V18Q0 28 28 18V-8Z" fill="#505050" />
    <ellipse cx="0" cy="-8" rx="28" ry="9" fill="#666" />
  </g>
);
const Bolt = ({ x, y }: { x: number; y: number }) => (
  <g transform={`translate(${x} ${y}) rotate(8)`}>
    <path d="M-63 0L-62 60Q-40 92 5 90 50 88 62 60L63 0Z" fill="url(#bolt)" />
    <ellipse rx="64" ry="37" fill="#5f5f5f" /><ellipse rx="56" ry="31" fill="#6b6b6b" strokeWidth="1.500" />
    <path d="M-30 -8L-8 -20 22 -16 32 4 12 20-20 16Z" fill="#2c2c2c" />
    <path d="M-10 -18V16M20 -12V12" stroke="#555" />
  </g>
);

const teeth = Array.from({ length: 11 }, (_, i) => {
  const t = (166 - i * 15) * (Math.PI / 180);
  const rot = 0.300;
  const ex = 290 * Math.cos(t), ey = 158 * Math.sin(t);
  return { x: 1062 + ex * Math.cos(rot) - ey * Math.sin(rot), y: 388 + ex * Math.sin(rot) + ey * Math.cos(rot) };
});

function Model() {
  return (
    <svg viewBox="0 0 1950 1650" width="650" height="550" className="absolute top-[203px] left-[454px]" stroke="#0c0c0c" strokeWidth="2.800" strokeLinejoin="round" fill="none">
      <defs>
        <linearGradient id="g1" gradientUnits="userSpaceOnUse" x1="340" y1="210" x2="620" y2="340">
          <stop offset="0" stopColor="#222" /><stop offset=".5" stopColor="#383838" /><stop offset=".66" stopColor="#8c8c8c" /><stop offset=".85" stopColor="#333" /><stop offset="1" stopColor="#222" />
        </linearGradient>
        <linearGradient id="g2" gradientUnits="userSpaceOnUse" x1="90" y1="600" x2="425" y2="620">
          <stop offset="0" stopColor="#242424" /><stop offset=".45" stopColor="#323232" /><stop offset=".62" stopColor="#555" /><stop offset=".72" stopColor="#c4c4c4" /><stop offset=".84" stopColor="#505050" /><stop offset="1" stopColor="#2a2a2a" />
        </linearGradient>
        <linearGradient id="g3" gradientUnits="userSpaceOnUse" x1="220" y1="930" x2="560" y2="820">
          <stop offset="0" stopColor="#1f1f1f" /><stop offset=".5" stopColor="#3a3a3a" /><stop offset=".68" stopColor="#5a5a5a" /><stop offset=".78" stopColor="#b5b5b5" /><stop offset=".88" stopColor="#555" /><stop offset="1" stopColor="#2f2f2f" />
        </linearGradient>
        <linearGradient id="g3d" gradientUnits="userSpaceOnUse" x1="400" y1="850" x2="490" y2="1160"><stop offset="0" stopColor="#303030" stopOpacity="0" /><stop offset="1" stopColor="#2f2f2f" /></linearGradient>
        <linearGradient id="g4" gradientUnits="userSpaceOnUse" x1="600" y1="1200" x2="870" y2="1050">
          <stop offset="0" stopColor="#1f1f1f" /><stop offset=".5" stopColor="#373737" /><stop offset=".72" stopColor="#606060" /><stop offset=".8" stopColor="#8c8c8c" /><stop offset=".92" stopColor="#3c3c3c" /><stop offset="1" stopColor="#2a2a2a" />
        </linearGradient>
        <linearGradient id="g4d" gradientUnits="userSpaceOnUse" x1="740" y1="1000" x2="900" y2="1260"><stop offset="0" stopColor="#303030" stopOpacity="0" /><stop offset="1" stopColor="#2d2d2d" /></linearGradient>
        <linearGradient id="g5" gradientUnits="userSpaceOnUse" x1="1130" y1="1340" x2="1330" y2="1200">
          <stop offset="0" stopColor="#1f1f1f" /><stop offset=".4" stopColor="#252525" /><stop offset="1" stopColor="#3d3d3d" />
        </linearGradient>
        <linearGradient id="g6" gradientUnits="userSpaceOnUse" x1="1540" y1="1250" x2="1740" y2="1080">
          <stop offset="0" stopColor="#1f1f1f" /><stop offset="1" stopColor="#303030" />
        </linearGradient>
        <linearGradient id="y1" x1="0" y1="0" x2="1" y2="1"><stop offset="0" stopColor="#ffd20c" /><stop offset="1" stopColor="#d3a800" /></linearGradient>
        <linearGradient id="y2" x1="0" y1="0" x2="1" y2=".15"><stop offset="0" stopColor="#d3a800" /><stop offset=".5" stopColor="#ffff80" /><stop offset="1" stopColor="#eab90a" /></linearGradient>
        <linearGradient id="y4" gradientUnits="userSpaceOnUse" x1="1530" y1="830" x2="1690" y2="900"><stop offset="0" stopColor="#b08c00" /><stop offset=".45" stopColor="#ffff80" /><stop offset=".7" stopColor="#ffe838" /><stop offset="1" stopColor="#f8d020" /></linearGradient>
        <linearGradient id="y3" x1="0" y1="1" x2="1" y2="0"><stop offset="0" stopColor="#a08000" /><stop offset=".6" stopColor="#fff052" /><stop offset="1" stopColor="#caa200" /></linearGradient>
        <linearGradient id="bolt" x1="0" x2="1"><stop offset="0" stopColor="#2c2c2c" /><stop offset=".4" stopColor="#5e5e5e" /><stop offset="1" stopColor="#333" /></linearGradient>
        <linearGradient id="rim" x1="0" x2="1"><stop offset=".2" stopColor="#00e32a" /><stop offset=".62" stopColor="#9dffc4" /><stop offset=".85" stopColor="#00ee2b" /></linearGradient>
        <linearGradient id="lug" x1="0" x2="1"><stop offset="0" stopColor="#00730f" /><stop offset=".5" stopColor="#00c123" /><stop offset="1" stopColor="#009a1b" /></linearGradient>
        <clipPath id="wall"><path d="M765 380L765 440Q830 600 960 665 1100 725 1240 690 1320 655 1340 600L1345 500Z" /></clipPath>
      </defs>

      {/* rear rollers */}
      <path d="M678 192Q790 105 910 60L1010 180 990 340 755 350Z" fill="#2f2f2f" />
      <path d="M705 216L925 90" /><path d="M908 62L1000 185" strokeWidth="14" stroke="#111" />
      <path d="M953 92L985 68 1020 120 1065 187H1000Z" fill="#b08c00" /><path d="M1020 155L1065 187H1010Z" fill="#f0bd05" />
      <path d="M985 70L1050 160" strokeWidth="14" stroke="#333" />
      <g transform="translate(1035 100) rotate(-35)"><path d="M-18 -22h36v44h-36z" fill="#444" /><ellipse cy="-22" rx="18" ry="8" fill="#555" /></g>
      <path d="M1235 240Q1310 210 1400 197 1440 195 1452 225L1400 300 1355 325 1290 290Z" fill="#2b2b2b" />
      <path d="M1400 300Q1360 210 1405 198" /><path d="M1392 300Q1385 220 1430 205" strokeWidth="8" />
      <path d="M1340 320L1400 300Q1412 240 1455 224L1490 228 1520 320 1510 345 1480 460 1440 495 1415 510 1390 560 1330 515Z" fill="url(#y1)" />
      <path d="M1400 300Q1412 240 1455 226L1430 290Z" fill="#8c6f00" />
      <path d="M1368 318L1425 285 1483 455 1432 503Z" fill="url(#y2)" />
      <Clip x={1487} y={282} rx={32} ry={54} r={22} />

      <path d="M1385 570Q1410 510 1480 490 1600 460 1730 463 1805 470 1832 540 1845 620 1800 660 1740 710 1700 725 1600 790 1520 792L1450 640Z" fill="#292929" />
      <ellipse cx="1755" cy="570" rx="80" ry="102" fill="#1c1c1c" /><ellipse cx="1760" cy="570" rx="70" ry="90" fill="#2e2e2e" />
      <path d="M1420 590Q1520 550 1610 540 1680 535 1770 502 1820 520 1828 590L1820 612Q1760 650 1650 700 1590 740 1550 780 1520 795 1500 790L1450 720Z" fill="#f3c408" />
      <path d="M1420 590Q1520 550 1612 540L1585 715 1525 765 1450 720Z" fill="#937400" />
      <path d="M1612 540L1680 530 1655 705 1585 715Z" fill="url(#y2)" />
      <path d="M1500 768L1530 765Q1560 720 1590 712L1650 703 1550 780Q1520 795 1500 785Z" fill="#c49c00" />
      <Clip x={1782} y={562} />

      <path d="M1650 775Q1780 725 1850 790 1890 850 1882 900 1880 960 1830 1010 1780 1060 1725 1075L1500 950 1480 900Z" fill="#262626" />
      <ellipse cx="1790" cy="860" rx="92" ry="106" fill="#1b1b1b" /><ellipse cx="1785" cy="858" rx="84" ry="98" fill="#3a3a3a" />
      <path d="M1765 965L1715 1040" />

      {/* yellow carrier */}
      <path d="M460 560L545 480 700 600 1400 560 1500 700 1530 760 1640 765 1600 900 1480 935 1400 1020 1200 1050 1000 1060 820 1020 640 870 540 830Z" fill="#d9ae00" />
      <path d="M1380 570Q1390 550 1400 570L1500 740 1540 790 1470 940 1440 920 1480 700Z" fill="#e0b402" />
      <path d="M1440 620L1520 760M1460 780L1500 800 1465 925" />
      <path d="M1505 790L1600 770 1500 930 1465 935Z" fill="#806500" />
      <path d="M1600 775L1640 765 1830 790Q1870 840 1840 900 1820 925 1780 922L1530 910 1500 925Z" fill="url(#y4)" />
      <path d="M1690 775L1580 910" />
      <path d="M1530 906L1580 915 1500 945 1465 940Z" fill="#8d7000" />
      <Clip x={1788} y={848} />
      <path d="M1180 1020L1430 1030 1420 1090 1400 1125 1310 1130Z" fill="#232323" />
      <path d="M1310 1122H1360Q1400 1110 1415 1080L1440 1205 1400 1160 1365 1165Z" fill="#d4aa00" /><path d="M1370 1150Q1420 1130 1445 1205L1420 1180 1390 1165Z" fill="#8a6d00" />

      {/* upper left roller and bracket */}
      <path d="M300 285L400 150Q420 115 445 112 540 130 620 210L555 430 545 492 505 455 497 385 430 345 300 312Z" fill="url(#g1)" />
      <path d="M497 140L380 320" />
      <path d="M640 178L755 268Q765 290 755 345H690L680 405 560 420 548 425 600 250Z" fill="url(#y1)" />
      <path d="M485 118L490 102 515 96 630 155Q650 175 640 215L555 445Q560 465 550 470L537 460 540 428 618 230Q610 190 570 172L485 125Z" fill="#d1a500" />
      <path d="M640 205L758 305M535 112L525 140M610 160L600 178M540 430H560" />
      <Pin x={566} y={100} a={18} />
      <path d="M485 118L490 102 515 97 600 140 590 168Z" fill="#d8ac00" />

      {/* left column */}
      <path d="M92 655L50 770 78 800Z" fill="#1f1f1f" /><path d="M78 808L65 830 78 845Z" fill="#c39b00" />
      <path d="M430 345L495 385 505 430 540 490 545 555 610 645 700 780 690 840H560L450 600 425 590 408 380Z" fill="#e8bb04" />
      <path d="M432 370L500 405M520 480L465 600M540 495L490 625M430 345L440 585" />
      <path d="M450 690L545 830 500 840Z" fill="#1d1d1d" />
      <path d="M160 350Q280 325 408 375L425 580 600 900 290 1125Q190 1130 95 1105 70 900 90 680 110 500 160 350Z" fill="url(#g2)" />
      <path d="M287 348L272 590M380 370L393 575M236 960L220 1100" />
      <ellipse cx="190" cy="1106" rx="98" ry="15" fill="#151515" />
      <path d="M205 312L225 306 385 320Q430 330 436 372L452 600 425 575 408 385Q390 350 340 345L205 335Z" fill="#d9ae04" />
      <path d="M285 310V335M385 320L375 348M436 372H410" />
      <Pin x={273} y={286} />
      <path d="M210 313L225 309 380 320 372 348 206 335Z" fill="#e0b409" />
      <path d="M135 1122Q220 1135 295 1130L310 1175 260 1178Q170 1175 135 1150Z" fill="#dcb005" />
      <path d="M208 1125V1150" /><g transform="translate(196 1178) scale(1 -1)"><Pin x={0} y={0} /></g>

      {/* front left roller */}
      <path d="M475 1415L720 1345 715 1310 640 1325 475 1395Z" fill="#e0b409" />
      <path d="M600 1180L690 1310 632 1345Z" fill="#927400" />
      <g transform="translate(552 1442) scale(1 -1)"><Pin x={0} y={0} a={12} /></g>
      <path d="M475 1440L600 1405 720 1365 690 1330 475 1412Z" fill="#e7ba0a" /><path d="M570 1385L578 1410" />
      <path d="M192 688Q290 640 400 615 480 740 540 880 600 1130 622 1210L635 1345 430 1412Q270 1110 225 900 195 770 192 688Z" fill="url(#g3)" />
      <path d="M192 688Q290 640 400 615 480 740 540 880 600 1130 622 1210L635 1345 430 1412Q270 1110 225 900 195 770 192 688Z" fill="url(#g3d)" />
      <path d="M360 635Q440 790 500 970 560 1180 593 1355" />
      <path d="M192 685Q290 630 400 612" strokeWidth="9" />
      <path d="M222 630L400 572Q440 575 462 610L570 805 545 815 440 630Q425 600 395 602L227 655Z" fill="#d9ae04" />
      <path d="M320 597L400 573 407 598 327 624Z" fill="#fff052" /><path d="M440 590L420 610M465 620L440 635" />
      <Pin x={272} y={583} a={-8} />
      <path d="M222 630L320 598 327 624 227 655Z" fill="url(#y3)" />

      {/* green hub */}
      <path d="M566 425Q545 470 540 552L605 645 700 675 690 790 790 930Q820 955 850 958L1420 918Q1460 915 1472 890L1480 790 1450 745 1455 660 1350 520 790 345 690 400Z" fill="#008019" />
      <path d="M848 958Q900 930 912 850L970 783 1175 765 1390 752 1480 790 1472 890Q1460 915 1420 918Z" fill="#00a51f" />
      <path d="M1178 768L1150 930M1172 768L1142 930M1415 815L1405 915M720 580L690 740M728 590L698 760" />
      <path d="M785 345H690L680 405Q650 405 630 408 580 405 565 430L570 450 608 503 622 445 770 680Q790 715 820 715L905 718Q950 730 958 783L1175 765 1392 752 1350 705Q1360 672 1452 665L1345 515Z" fill="#00f32d" />
      <path d="M690 355Q730 370 725 410 700 435 675 412Z" fill="#007b15" /><path d="M600 460Q600 430 640 432L622 445 608 500Z" fill="#009a1b" />
      <path d="M1350 705Q1355 672 1452 665L1443 730 1390 728Z" fill="url(#lug)" />
      <path d="M1365 812L1378 760 1430 750Q1482 765 1478 790 1465 812 1420 815Z" fill="#00f02c" /><ellipse cx="1413" cy="768" rx="32" ry="22" fill="#00811a" />
      <path d="M785 715L905 718Q950 730 960 780L945 840 900 780H780Z" fill="#007d18" />
      <path d="M786 770L850 765Q930 775 945 840L965 820 960 780Q945 720 905 718L800 712Q790 740 786 770" fill="url(#lug)" />
      <path d="M775 850Q790 765 860 765 940 780 950 840L930 850Q880 865 800 820Z" fill="#00e72a" />
      <path d="M790 930Q770 880 800 815 830 860 905 852L872 958Q820 955 790 930Z" fill="url(#lug)" />
      <ellipse cx="870" cy="812" rx="40" ry="25" fill="#006e14" /><path d="M970 790L945 850 905 852" />

      {/* pulley */}
      <g transform="rotate(15 1045 540)">
        <ellipse cx="1040" cy="545" rx="330" ry="185" fill="url(#rim)" />
        <ellipse cx="1040" cy="530" rx="325" ry="176" fill="#00e42a" />
        <ellipse cx="1045" cy="520" rx="302" ry="160" fill="#00df29" />
      </g>
      <g clipPath="url(#wall)">
        <path d="M765 380V430Q850 590 980 640 1150 690 1320 600V400Z" fill="#006e14" stroke="none" />
        {teeth.map((p, i) => (
          <g key={i}>
            <path d={`M${p.x - 34} ${p.y - 180}L${p.x - 38} ${p.y + 108}Q${p.x - 8} ${p.y + 88} ${p.x + 16} ${p.y + 118}L${p.x + 22} ${p.y - 180}Z`} fill={i % 2 ? "#007a17" : "#008a1a"} />
            <path d={`M${p.x + 18} ${p.y - 160}L${p.x + 14} ${p.y + 122}Q${p.x + 22} ${p.y + 138} ${p.x + 34} ${p.y + 122}L${p.x + 38} ${p.y - 160}Z`} fill="#00b022" />
            <path d={`M${p.x + 28} ${p.y - 150}L${p.x + 24} ${p.y + 128}M${p.x - 26} ${p.y - 150}L${p.x - 30} ${p.y + 104}`} />
          </g>
        ))}
      </g>
      <g transform="rotate(18 1085 376)"><ellipse cx="1087" cy="381" rx="313" ry="168" fill="#00b022" /><ellipse cx="1085" cy="372" rx="313" ry="168" fill="#00f72e" /></g>
      <g transform="rotate(14 1087 370)">
        <ellipse cx="1087" cy="370" rx="188" ry="105" fill="#007f19" /><ellipse cx="1085" cy="382" rx="184" ry="94" fill="#00ec2b" stroke="none" />
        <ellipse cx="1087" cy="370" rx="188" ry="105" />
        <ellipse cx="1083" cy="382" rx="143" ry="86" fill="#3a3a3a" /><ellipse cx="1083" cy="374" rx="143" ry="82" fill="#6a6a6a" />
        <ellipse cx="1083" cy="374" rx="126" ry="70" fill="#222" /><ellipse cx="1083" cy="374" rx="114" ry="61" fill="#4a4a4a" /><ellipse cx="1083" cy="374" rx="102" ry="54" fill="#1d1d1d" />
        <ellipse cx="1083" cy="374" rx="90" ry="48" fill="#707070" /><ellipse cx="1083" cy="374" rx="80" ry="41" fill="#555" />
      </g>
      <path d="M1015 350L1070 330 1140 332 1158 375 1120 405 1070 410 1022 395Z" fill="#383838" /><path d="M1095 330L1080 410M1140 332L1158 375" /><path d="M1045 336Q1070 325 1095 332Z" fill="#ddd" stroke="none" />

      {/* bolts */}
      <Bolt x={623} y={685} />

      {/* right front roller */}
      <path d="M1420 1100Q1460 1240 1530 1305 1590 1355 1650 1372 1700 1375 1740 1340 1785 1290 1780 1230 1780 1140 1720 1070 1650 980 1560 950 1500 940 1460 990Z" fill="url(#g6)" />
      <path d="M1455 1125Q1475 1220 1520 1300" />
      <ellipse cx="1520" cy="1055" rx="103" ry="105" fill="#171717" /><ellipse cx="1516" cy="1052" rx="96" ry="98" fill="#303030" /><ellipse cx="1512" cy="1045" rx="85" ry="85" fill="#1f1f1f" />
      <path d="M1305 1025L1430 1070 1500 1105Q1570 1110 1580 1050L1570 1000 1440 920 1260 1005Z" fill="#b89200" />
      <path d="M1260 1005L1430 920 1520 965Q1575 1000 1572 1045 1550 1095 1490 1095L1305 1022Z" fill="#deb306" />
      <path d="M1190 1020L1262 1005 1300 1025 1240 1055Z" fill="#a38200" />
      <Clip x={1505} y={1037} rx={53} ry={52} r={28} />

      {/* lower centre rollers */}
      <path d="M780 960L1000 990V1165L940 1160Z" fill="#262626" />
      <path d="M950 1165L1010 1170 1130 1350 1142 1385 1140 1420 1080 1530 1060 1565 990 1592 960 1570 1095 1475 1000 1300Z" fill="#d5aa04" />
      <path d="M985 1220L1060 1275 1000 1270Z" fill="#fff052" /><path d="M1075 1395L1130 1350M1090 1440L1140 1385M1090 1480L1140 1390" />
      <g transform="translate(1045 1572) rotate(-22) scale(.85 -.9)"><Pin x={0} y={0} /></g>
      <path d="M960 1590L1100 1490 1080 1530 1040 1575 990 1592Z" fill="#d5aa04" />
      <path d="M975 1100Q980 1010 1060 985 1130 980 1190 1020 1290 1090 1340 1155 1440 1270 1520 1390 1550 1430 1525 1490 1480 1570 1400 1568 1360 1560 1340 1540 1210 1460 1110 1340 1020 1240 1000 1160Z" fill="url(#g5)" />
      <ellipse cx="1068" cy="1078" rx="96" ry="90" transform="rotate(-25 1068 1078)" fill="#171717" /><ellipse cx="1064" cy="1074" rx="86" ry="80" transform="rotate(-25 1068 1078)" fill="#303030" />
      <path d="M845 985L900 960 1080 935 1100 950 1090 990Q1125 1060 1100 1105 1050 1140 1000 1095L895 990Z" fill="#a88600" />
      <path d="M895 972L1062 940 1088 985Q1112 1040 1090 1082 1050 1115 1005 1085L905 990Z" fill="#cfa504" />
      <Clip x={1040} y={1048} rx={52} ry={48} r={27} />
      <path d="M545 815L560 802H675L730 845 850 962 915 975 910 1025 840 1005 700 850 660 840Z" fill="#d2a703" />
      <path d="M690 835L830 970M560 808H675M815 960L850 990M840 1000L875 980 915 990" />
      <path d="M510 985Q520 920 620 870 680 840 695 885 830 990 950 1160 1060 1330 1097 1475 1080 1530 1000 1575 960 1592 920 1580 750 1430 620 1210 540 1060 510 985Z" fill="url(#g4)" />
      <path d="M510 985Q520 920 620 870 680 840 695 885 830 990 950 1160 1060 1330 1097 1475 1080 1530 1000 1575 960 1592 920 1580 750 1430 620 1210 540 1060 510 985Z" fill="url(#g4d)" />
      <path d="M700 890Q840 1030 960 1210 1050 1340 1095 1470" />
      <g transform="rotate(-33 602 922)"><ellipse cx="602" cy="922" rx="108" ry="48" fill="#151515" /><ellipse cx="600" cy="920" rx="92" ry="36" fill="#2e2e2e" /></g>
      <path d="M545 812H665L655 870Q610 935 550 952 515 935 525 905Z" fill="#b08c00" />
      <path d="M545 812H665L655 860Q600 920 540 925L525 905Z" fill="#e0b406" />
      <g transform="rotate(-25 572 880)"><ellipse cx="572" cy="885" rx="55" ry="35" fill="#5a5a5a" /><path d="M545 860V885Q570 900 600 885V860Z" fill="#4a4a4a" /><ellipse cx="572" cy="860" rx="27" ry="16" fill="#707070" /></g>
      <Bolt x={1168} y={912} />

      {/* origin triad and mate point */}
      <ellipse cx="1040" cy="549" rx="48" ry="28" stroke="#2f5a63" strokeWidth="13" transform="rotate(10 1040 549)" /><ellipse cx="1040" cy="549" rx="48" ry="28" stroke="#dff3ee" strokeWidth="8" transform="rotate(10 1040 549)" />
      <path d="M1000 572L1045 552 1060 580Z" fill="#eef" stroke="none" />
      <path d="M1036 558L1026 605" stroke="#0000e8" strokeWidth="10" /><path d="M1063 588L1077 609" stroke="#d80000" strokeWidth="6" /><path d="M950 553H1000" stroke="#00b020" strokeWidth="4" />
      <circle cx="990" cy="733" r="11" fill="#111" stroke="white" strokeWidth="6" /><circle cx="990" cy="733" r="15" />
    </svg>
  );
}

function ViewCube() {
  const L = "#e0e7ee";
  return (
    <svg viewBox="0 0 600 540" width="200" height="180" className="absolute top-[-7px] right-0 font-['Roboto']">
      <g fill={L}>
        <path d="M330 66L352 96H307zM330 516L307 486H352zM105 291L135 269V313zM555 291L525 269V313z" />
        <path d="M268 90Q215 105 183 143L175 130 167 168 205 163 196 153Q220 123 271 107zM392 90Q445 105 477 140L490 128 492 168 455 163 464 153Q440 123 389 107z" />
        <path d="M235 190L330 158 430 190 465 240 440 370 395 400 325 425Q290 420 215 350L197 320 213 240Z" />
      </g>
      <g fill="white" stroke="white" strokeWidth="10" strokeLinejoin="round">
        <path d="M275 205L345 172 430 192Q445 200 430 225L350 255 290 232Z" />
        <path d="M222 250Q230 240 250 250L315 280Q325 290 322 310L308 385Q300 395 285 385L225 330Q215 320 218 300Z" />
        <path d="M355 290L430 268Q447 268 445 285L430 355 350 395Q342 390 345 370Z" />
        <ellipse cx="247" cy="218" rx="8" ry="14" transform="rotate(30 247 218)" /><ellipse cx="317" cy="405" rx="18" ry="4" /><circle cx="343" cy="280" r="10" />
        <path d="M203 333L222 328M415 378L440 360M340 160V175" strokeWidth="7" />
      </g>
      <g fill="#333" fontSize="31" textAnchor="middle">
        <text transform="translate(345 210) rotate(158) skewX(20)">Bottom</text>
        <text transform="translate(273 308) rotate(-150) skewX(10) scale(.95 1.2)">Right</text>
        <text transform="translate(390 324) rotate(163) skewX(-15) scale(.9 1.1)">Front</text>
      </g>
      <g strokeWidth="3.500" fill="none">
        <path d="M476 240L351 146" stroke="#28b428" /><path d="M476 240L355 291" stroke="#e02828" /><path d="M476 240L438 380" stroke="#3a3ae6" />
      </g>
      <g fontSize="42" textAnchor="middle">
        <text x="329" y="146" fill="#28a828" textLength="22" lengthAdjust="spacingAndGlyphs">Y</text>
        <text x="334" y="315" fill="#e02828" textLength="20" lengthAdjust="spacingAndGlyphs">X</text>
        <text x="431" y="421" fill="#3a3ae6" textLength="20" lengthAdjust="spacingAndGlyphs">Z</text>
      </g>
      <g stroke="#333" strokeWidth="3" strokeLinejoin="round">
        <path d="M465 462L491 470V504L465 515 439 504V470Z" fill="#fff" /><path d="M439 470L465 480V515L439 504Z" fill="#999" strokeWidth="1" /><path d="M491 470L465 480V515L491 504Z" fill="#ddd" strokeWidth="1" />
      </g>
      <path d="M516 483H540L528 495z" fill="#333" />
    </svg>
  );
}

function SideTools() {
  const icons = [
    <Svg key="0" s={18}><rect x="1" y="1" width="22" height="22" rx="3" strokeWidth="1.500" /><path d="M5 6.500h12M8 10.500h12M8 14.500h12M8 18.500h12M6.500 6v12" strokeWidth="2.400" /></Svg>,
    <Svg key="1" s={20}><path d="M15 6l7 4v9l-8 4-7-4v-9M7 10l7 3 8-3M14 13v10" strokeWidth="1.500" /><path d="M1 1h11v9H1z" fill="#bcd3f2" stroke="#1651b0" strokeWidth="1.600" /><path d="M4.500 1v9M8.500 1v9M1 4h11M1 7h11" stroke="#1651b0" /></Svg>,
    <Svg key="2" s={19}><path d="M2 2h6v6H2z" fill="#bbb" stroke="#666" /><path d="M5 10v3h8" stroke="#1651b0" strokeDasharray="2 1.500" strokeWidth="1.700" /><path d="M9 15h6V9l3-1 5 2v10l-3 3h-8l-3-3z" fill="#fff" stroke="#666" /><path d="M9 17l3 2h4l4-4V9" stroke="#666" /></Svg>,
    <Svg key="3" s={19}><path d="M1 13h14v9H1z" strokeWidth="1.700" /><path d="M13 12V1h9v16" stroke="#1651b0" strokeDasharray="2.500 1.500" strokeWidth="1.700" /><circle cx="18" cy="17.500" r="5" fill="#e5ecf8" stroke="#1651b0" /><circle cx="18" cy="17.500" r="2.500" /></Svg>,
    <div key="4" className="relative font-['Liberation_Serif'] text-[18px] leading-[18px] font-bold text-[#333] italic">(x)<svg width="10" height="8" viewBox="0 0 10 8" className="absolute -top-px left-0"><path d="M0 0h10v8H0z" fill="#333" /><path d="M1 2.500h8M1 5.500h8M3.500 1v6M6.500 1v6" stroke="#ddd" /></svg></div>,
  ];
  return (
    <div className="absolute top-[311px] right-0 w-[32px] border-t border-l border-[#a0a0a0] bg-white">
      {icons.map((n, i) => <div key={i} className="flex h-[33px] items-center justify-center border-b border-[#a0a0a0] pt-px">{n}</div>)}
    </div>
  );
}

const docs = [
  ["p", "Motor Clamp", 80], ["p", "Inner Side Plate Left", 125], ["p", "Outter Side Plate Left", 133], ["p", "Inner Side Plate Right", 133],
  ["p", "Outter Side Plate Right", 141], ["a", "Assembly 1", 71], ["p", "20 Teeth Pulley", 97], ["a", "Left Slant Mecanum As...", 153], ["a", "Right Slant Mecanum A...", 154],
] as [string, string, number][];

function DocTabs() {
  return (
    <div className="flex h-[30px] shrink-0 border-b border-[#777] bg-[#d6d6d6] font-['Roboto',sans-serif] text-[15px] text-[#707070]">
      <div className="flex w-[39px] items-center justify-center pr-[6px]"><Plus size={20} strokeWidth={3.500} color="#666" /></div>
      {docs.map(([k, t, w], i) => (
        <div key={t} className={"mr-[2px] flex h-[27px] w-[200px] items-center rounded-b-[5px] pl-[12px] shadow-[0_1px_1px_#b5b5b5] " + (i === 8 ? "border-b-2 border-[#1651b0] bg-white pt-[2px] text-[#444]" : "bg-[#e9e9e9] pt-px")}>
          <div className="flex w-[18px]">{k === "p" ? <PartIcon /> : <AsmIcon />}</div>
          <Fit w={w} className="ml-[3px] pt-px">{t}</Fit>
        </div>
      ))}
    </div>
  );
}

const Chrome = () => (
  <svg width="24" height="24" viewBox="0 0 24 24">
    <path d="M12 12L1.600 6A12 12 0 0 1 22.400 6Z" fill="#e33b2e" /><path d="M12 12L22.400 6A12 12 0 0 1 12 24Z" fill="#fcc934" /><path d="M12 12V24A12 12 0 0 1 1.600 6Z" fill="#1e9e4a" />
    <path d="M12 6h10.400L17 14z" fill="#fcc934" /><path d="M1.600 6l5.500 9L12 7z" fill="#1e9e4a" /><path d="M1.600 6h20.800L12 7z" fill="#e33b2e" /><path d="M17.200 15L12 24 9 17z" fill="#fcc934" />
    <circle cx="12" cy="12" r="6" fill="white" /><circle cx="12" cy="12" r="4.700" fill="#2b7de9" />
  </svg>
);

const apps: React.ReactNode[] = [
  <div key="w" className="grid size-[23px] grid-cols-2 gap-px"><i className="bg-[#7fe4ff]" /><i className="bg-[#5fd3fb]" /><i className="bg-[#4cc8f8]" /><i className="bg-[#27b0ef]" /></div>,
  <svg key="f" width="24" height="22" viewBox="0 0 24 22"><path d="M0 1.500Q0 0 1.500 0H8l2.500 3H0z" fill="#e6a100" /><path d="M0 3h10l2-1h11q1 0 1 1v17q0 1-1 1H1q-1 0-1-1z" fill="#fdcf4a" /><path d="M4 16q0-2 2-2h12q2 0 2 2v5H4z" fill="#0f6fc5" /><path d="M8 18h8v3H8z" fill="#0a4f98" /></svg>,
  <div key="m" className="relative">
    <svg width="24" height="24" viewBox="0 0 24 24"><defs><linearGradient id="ms" x1="0" y1="1" x2="1" y2="0"><stop stopColor="#0a90ff" /><stop offset=".5" stopColor="#8a44ff" /><stop offset="1" stopColor="#ff6078" /></linearGradient></defs><path d="M12 1C5 1 1 6 1 12q0 5 3 8v4l4-2q2 1 4 1c7 0 11-5 11-11S19 1 12 1" fill="url(#ms)" /><path d="M5 15l5-5 3 3 5-3-5 5.500-3-3z" fill="white" stroke="white" /></svg>
    <span className="absolute -top-[6px] left-[13px] flex size-[15px] items-center justify-center rounded-full bg-[#f00000] text-[10px] text-white">1</span>
  </div>,
  <Chrome key="c" />,
  <div key="s" className="rounded-full bg-black"><FaSpotify size={24} color="#1fd660" /></div>,
  <div key="d" className="flex size-6 items-center justify-center rounded-full bg-[#5865f2]"><FaDiscord size={16} color="white" /></div>,
  <div key="si" className="flex size-6 items-center justify-center rounded-full bg-[#2c6bed]"><div className="flex size-[18px] items-center justify-center rounded-full border border-dashed border-white"><div className="size-[13px] rounded-full bg-white" /></div></div>,
  <svg key="ds" width="22" height="22" viewBox="0 0 22 22"><path d="M.7.700h20.600v20.600H.7z" fill="#4a443b" stroke="#d9ceb4" strokeWidth="1.400" /><path d="M5 4h4v9H5z" fill="#f43d2a" /><path d="M9 4h4v9H9z" fill="#ffb400" /><path d="M12 4h3v9h-3z" fill="#2bb24c" /><path d="M15 4h2v9h-2z" fill="#1c83e0" /><path d="M5 15h3v3H5zM10 15h3v3h-3zM15 15h3v3h-3z" fill="#d9ceb4" /></svg>,
  <div key="o" className="relative flex size-6 items-center justify-center">
    <svg width="24" height="24" viewBox="0 0 24 24" fill="none"><path d="M12 .7l10 5.600v11.400L12 23.300 2 17.700V6.300z" fill="#000" stroke="#ccc" /><circle cx="12" cy="12" r="8" stroke="#ff3030" strokeWidth="1.500" strokeDasharray="9 42" /><circle cx="12" cy="12" r="8" stroke="#2a6cff" strokeWidth="1.500" strokeDasharray="9 42" strokeDashoffset="-10" /><circle cx="12" cy="12" r="8" stroke="#c020e0" strokeWidth="1.500" strokeDasharray="9 42" strokeDashoffset="-20" /><circle cx="12" cy="12" r="8" stroke="#20c8c0" strokeWidth="1.500" strokeDasharray="9 42" strokeDashoffset="-30" /><circle cx="12" cy="12" r="8" stroke="#f0c020" strokeWidth="1.500" strokeDasharray="9 42" strokeDashoffset="-40" /></svg>
    <FaPowerOff size={10} color="white" className="absolute" />
  </div>,
  <svg key="a" width="24" height="24" viewBox="0 0 24 24" fill="none" stroke="#c51f2a" strokeWidth="1.400" strokeLinejoin="round"><path d="M8 1q5 4 5 10l10 6-9 2q-5 4-12 4L6 13Q9 7 8 1M6 13l7-2M13 11l-3 5 4 3M10 16L2 23M10 16L6 13M14 19l-1-8" /></svg>,
  <FaWhatsapp key="wa" size={26} color="#25d366" />,
  <svg key="ff" width="24" height="24" viewBox="0 0 24 24"><defs><linearGradient id="fx" x1="1" y1="0" x2="0" y2="1"><stop stopColor="#ffe226" /><stop offset=".5" stopColor="#ff7139" /><stop offset="1" stopColor="#e31587" /></linearGradient></defs><path d="M14 0q8 3 9 11c1 8-5 13-11 13S1 20 1 13q0-5 3-9l2 3q2-2 5-2 0-3 3-5" fill="url(#fx)" /><circle cx="12.500" cy="14" r="5" fill="#7542e5" /><path d="M5 9q6-2 8 1l-3 2q-3 2 0 5-6-1-5-8" fill="#ff9a2e" /></svg>,
  <svg key="ca" width="18" height="24" viewBox="0 0 18 24"><rect width="18" height="24" rx="1" fill="#7f8c99" /><path d="M2 2h14v4H2z" fill="#59dbf7" /><path d="M2 8h4v3.500H2zM7 8h4v3.500H7zM12 8h4v3.500h-4zM2 13h4v3.500H2zM7 13h4v3.500H7zM2 18h4v3.500H2zM7 18h4v3.500H7z" fill="#dfe5ea" /><path d="M12 13h4v9h-4z" fill="#17498c" /></svg>,
];

function Taskbar() {
  return (
    <div className="flex h-[48px] shrink-0 items-center bg-[#1c1c1c] pl-[10px] text-white">
      {apps.map((a, i) => (
        <div key={i} className="flex h-full w-[44px] items-center justify-center pl-px">
          <div className={"flex h-[40px] w-[40px] flex-col items-center justify-between rounded-[4px] " + (i === 3 ? "border border-[#303030] bg-[#292929]" : "")}>
            <div className={"flex h-[36px] items-center " + (i === 3 ? "mt-px" : "mt-[2px]")}>{a}</div>
            <i className={"-mt-[2px] h-[3px] shrink-0 rounded-full " + (i === 3 ? "w-4 bg-[#4cc2ff]" : i === 2 || i === 12 ? "w-[6px] bg-[#9a9a9a]" : "w-0")} />
          </div>
        </div>
      ))}
      <ChevronUp size={15} strokeWidth={2} className="ml-auto" />
      <Fit w={24} className="ml-[18px] pt-px">ENG</Fit>
      <svg width="17" height="17" viewBox="0 0 17 17" className="ml-[17px]" fill="none" stroke="white" strokeWidth="1.300"><path d="M10 1.500H2q-1 0-1 1V11q0 1 1 1h10V8M5 16h6M8 12v4" /><path d="M12 1h4v5h-4zM14 6v10" /></svg>
      <svg width="17" height="14" viewBox="0 0 17 14" className="ml-[8px]" fill="none" stroke="white" strokeWidth="1.200"><path d="M1 5h2l4-4v12L3 9H1zM9 5q1.500 2 0 4" /><path d="M11 3q3 4 0 8" /><path d="M13 1.500q4.500 5.500 0 11" stroke="#555" /></svg>
      <div className="ml-[16px] flex flex-col items-end pt-px leading-[16px]">
        <Fit w={43}>1:47 PM</Fit>
        <Fit w={55}>6/30/2024</Fit>
      </div>
      <svg width="14" height="16" viewBox="0 0 14 16" className="mr-[21px] ml-[8px]" fill="#90e2ff"><path d="M7 0q5 0 5 6v4l2 3H0l2-3V6q0-6 5-6M5 14h4q-2 3-4 0" /></svg>
    </div>
  );
}

export default function App() {
  return (
    <div className="flex h-[1080px] w-[1920px] flex-col overflow-hidden bg-white font-['Open_Sans','Noto_Sans',sans-serif] text-[12px]">
      <div className="h-[121px] shrink-0 border-b border-[#5c5c5c] bg-[#323232]">
        <TabStrip />
        <AddressBar />
        <Bookmarks />
      </div>
      <DocHeader />
      <div className="flex min-h-0 flex-1">
        <Rail />
        <div className="flex min-w-0 flex-1 flex-col">
          <Toolbar />
          <div className="flex min-h-0 flex-1">
            <Panel />
            <div className="relative flex-1">
              <Model />
              <ViewCube />
              <SideTools />
              <div className="absolute top-[377px] left-[-1px] flex h-[34px] w-[33px] items-center justify-center border border-l-0 border-[#a0a0a0] bg-white pt-px">
                <svg width="18" height="18" viewBox="0 0 18 18" fill="none" stroke="#333"><path d="M0 1l3 3 3-3" strokeWidth="1.600" /><path d="M3 5v12" stroke="#999" strokeWidth="2" /><path d="M8 1.500h10M5.500 6.500H18M5.500 11.500H18M5.500 16.500H18" /></svg>
              </div>
              <div className="absolute right-[11px] bottom-[4px] flex items-center gap-[16px]">
                <Svg s={17}><circle cx="15" cy="7" r="6" strokeWidth="1.600" /><circle cx="15" cy="7" r="2.500" strokeWidth="1.600" /><path d="M1 12h20v10H1zM21 7v6M4 18v3M8 18v3M12 18v3M16 18v3" strokeWidth="1.600" /></Svg>
                <svg width="20" height="14" viewBox="0 0 20 14" fill="none" stroke="#333" strokeWidth="1.300"><path d="M1 13V10a9 9 0 0 1 18 0v3z" fill="#eee" /><path d="M5 10.500a5 5 0 0 1 10 0l-2 1q-3-2.500-6 0z" fill="white" /></svg>
                <Svg s={17}><path d="M4 2h16M10 2v17M14 2v17M1 22.500h22" strokeWidth="2" /><path d="M4 3L1 14h7zM20 3l-4 11h7z" strokeWidth="1.400" /></Svg>
              </div>
            </div>
          </div>
          <DocTabs />
        </div>
      </div>
      <Taskbar />
    </div>
  );
}
